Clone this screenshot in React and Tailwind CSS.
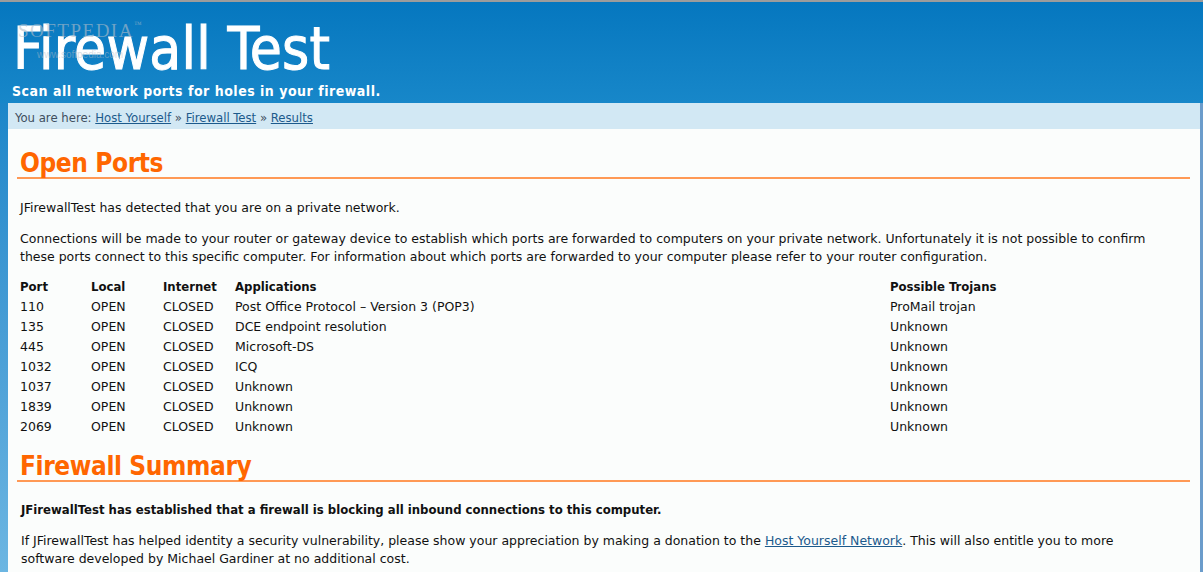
const ports = [
  { port: "110", app: "Post Office Protocol – Version 3 (POP3)", trojan: "ProMail trojan" },
  { port: "135", app: "DCE endpoint resolution", trojan: "Unknown" },
  { port: "445", app: "Microsoft-DS", trojan: "Unknown" },
  { port: "1032", app: "ICQ", trojan: "Unknown" },
  { port: "1037", app: "Unknown", trojan: "Unknown" },
  { port: "1839", app: "Unknown", trojan: "Unknown" },
  { port: "2069", app: "Unknown", trojan: "Unknown" },
];

// regular text is wider than the bold face in the original, so two stacks
const body = { fontFamily: '"DejaVu Sans", Tahoma, sans-serif' };
const narrow = { fontFamily: '"DejaVu Sans Condensed", "DejaVu Sans", Tahoma, sans-serif' };

const SectionTitle = ({ children }) => (
  <div className="border-b-2 border-[#ff9955] pl-[3px] leading-none">
    <h2 className="text-[26px] font-bold tracking-[-0.4px] text-[#ff6600] h-[31px] pt-[4px]" style={narrow}>
      {children}
    </h2>
  </div>
);

const Th = ({ children }) => (
  <span className="font-bold text-[13px]" style={narrow}>
    {children}
  </span>
);

const App = () => {
  return (
    <div className="w-[1203px] h-[572px] overflow-hidden bg-[#fbfdfc] text-[12.5px] text-[#111]" style={body}>
      <div className="h-[2px] bg-[#9c9c9c]" />
      {/* header */}
      <div className="relative h-[101px] bg-gradient-to-b from-[#0577bf] to-[#1787c9] pl-[13px]" style={narrow}>
        <h1 className="text-[58px] text-white leading-none pt-[18px] tracking-[0.2px] [-webkit-text-stroke:1px_white]">
          Firewall Test
        </h1>
        <p className="text-[14px] font-bold text-white mt-[5px] leading-[16px] -ml-[1px] tracking-[0.5px]">
          Scan all network ports for holes in your firewall.
        </p>
        <div
          className="absolute left-[18px] top-[19px] text-[19px] tracking-[1.5px] text-[#b4bec8]/60 leading-none"
          style={{ fontFamily: '"Liberation Serif", serif' }}
        >
          SOFTPEDIA<span className="text-[8px] align-top">™</span>
        </div>
        <div
          className="absolute left-[37px] top-[48px] text-[10px] text-[#b4bec8]/50 leading-none"
          style={{ fontFamily: '"Liberation Sans", sans-serif' }}
        >
          www.softpedia.com
        </div>
      </div>
      <div className="flex h-[469px]">
        <div className="w-[8px] bg-gradient-to-b from-[#1a86c9] to-[#6cb6e2]" />
        <div className="flex-1 flex flex-col">
          {/* breadcrumb */}
          <div className="h-[26px] bg-[#d2e8f4] pl-[7px] pt-[5px] text-[13px] text-[#3e4e5e]" style={narrow}>
            You are here: <a className="underline text-[#1c5a8c]">Host Yourself</a> »{" "}
            <a className="underline text-[#1c5a8c]">Firewall Test</a> »{" "}
            <a className="underline text-[#1c5a8c]">Results</a>
          </div>
          <div className="pl-[9px] pr-[10px] pt-[17px]">
            <SectionTitle>Open Ports</SectionTitle>
            <div className="pl-[3px]">
              <p className="mt-[20px] leading-[18px]">JFirewallTest has detected that you are on a private network.</p>
              <p className="mt-[13px] leading-[18px]">
                Connections will be made to your router or gateway device to establish which ports are forwarded to computers on your private network. Unfortunately it is not possible to confirm
                <br />
                these ports connect to this specific computer. For information about which ports are forwarded to your computer please refer to your router configuration.
              </p>
              <div className="mt-[11px] grid grid-cols-[71px_72px_72px_655px_1fr] leading-[20px]">
                <Th>Port</Th>
                <Th>Local</Th>
                <Th>Internet</Th>
                <Th>Applications</Th>
                <Th>Possible Trojans</Th>
                {ports.map((p) => (
                  <div key={p.port} className="contents">
                    <span>{p.port}</span>
                    <span>OPEN</span>
                    <span>CLOSED</span>
                    <span>{p.app}</span>
                    <span>{p.trojan}</span>
                  </div>
                ))}
              </div>
            </div>
            <div className="mt-[12px]">
              <SectionTitle>Firewall Summary</SectionTitle>
            </div>
            <div className="pl-[4px]">
              <p className="mt-[19px] font-bold text-[13px] leading-[18px]" style={narrow}>
                JFirewallTest has established that a firewall is blocking all inbound connections to this computer.
              </p>
              <p className="mt-[13px] leading-[18px]">
                If JFirewallTest has helped identity a security vulnerability, please show your appreciation by making a donation to the{" "}
                <a className="underline text-[#1c5a8c]">Host Yourself Network</a>. This will also entitle you to more
                <br />
                software developed by Michael Gardiner at no additional cost.
              </p>
            </div>
          </div>
        </div>
        <div className="w-[3px] bg-[#6b9ccb]" />
      </div>
    </div>
  );
};

export default App;
